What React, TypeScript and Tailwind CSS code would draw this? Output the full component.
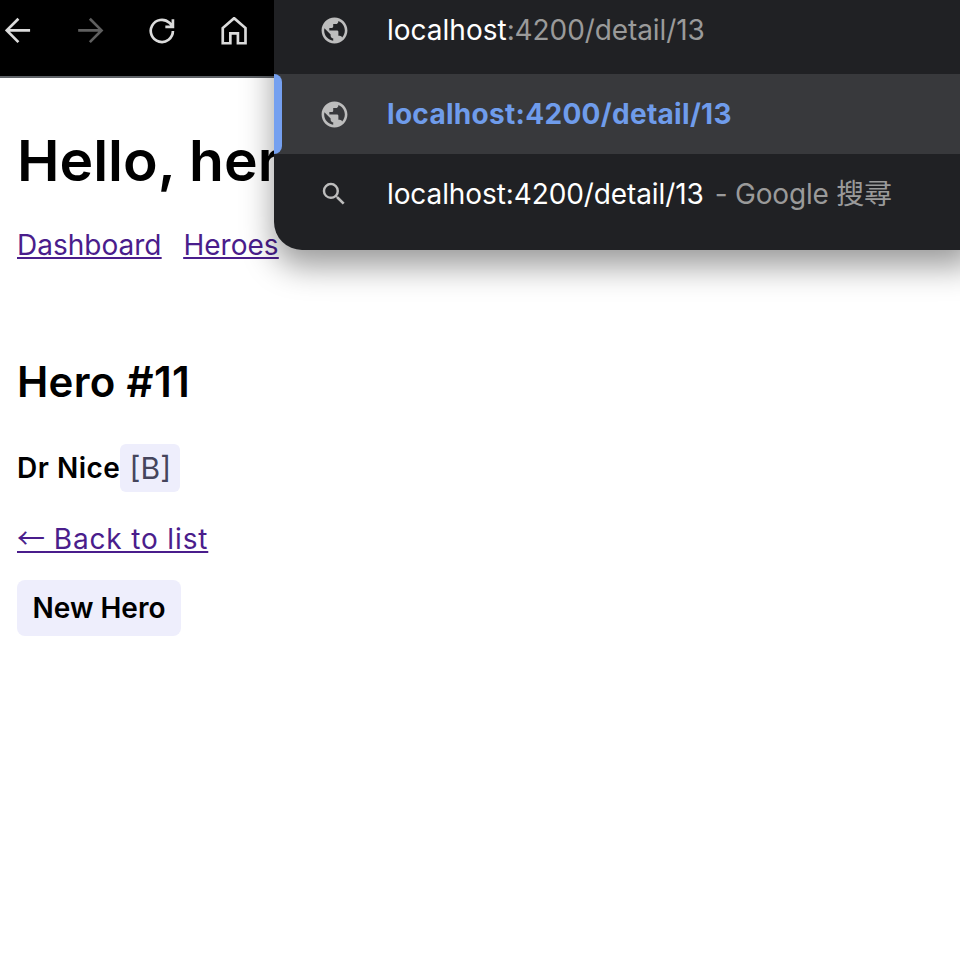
const FONT = "font-['Inter','Noto_Sans_CJK_TC',sans-serif]";

function GlobeIcon() {
  return (
    <svg viewBox="0 0 24 24" className="h-[31px] w-[31px]" fill="#bdbdbd">
      <path d="M12 2C6.48 2 2 6.48 2 12s4.48 10 10 10 10-4.48 10-10S17.52 2 12 2zM11 19.93c-3.95-.49-7-3.85-7-7.93 0-.62.08-1.21.21-1.79L9 15v1c0 1.1.9 2 2 2v1.93zm6.9-2.54c-.26-.81-1-1.39-1.9-1.39h-1v-3c0-.55-.45-1-1-1H8v-2h2c.55 0 1-.45 1-1V7h2c1.1 0 2-.9 2-2v-.41c2.93 1.19 5 4.06 5 7.41 0 2.08-.8 3.97-2.1 5.39z" />
    </svg>
  );
}

function SearchIcon() {
  return (
    <svg viewBox="0 0 24 24" className="h-[30px] w-[30px]" fill="#bdbdbd">
      <path d="M15.5 14h-.79l-.28-.27A6.471 6.471 0 0 0 16 9.5 6.5 6.5 0 1 0 9.5 16c1.61 0 3.09-.59 4.23-1.57l.27.28v.79l5 4.99L20.49 19l-4.99-5zm-6 0C7.01 14 5 11.99 5 9.5S7.01 5 9.5 5 14 7.01 14 9.5 11.99 14 9.5 14z" />
    </svg>
  );
}

function ToolbarIcon({ path, className }: { path: string; className: string }) {
  return (
    <svg viewBox="0 0 24 24" className={className} fill="none" stroke="currentColor" strokeWidth="2.3">
      <path d={path} />
    </svg>
  );
}

export default function App() {
  return (
    <div className={`relative h-[962px] w-[960px] overflow-hidden bg-white text-black ${FONT}`}>
      {/* Browser toolbar */}
      <div className="flex h-[78px] items-start border-b-2 border-[#5f6368] bg-black pl-[5px] pt-[17px] text-[#dcdcdc]">
        <ToolbarIcon className="h-7 w-7" path="M21.5 11.5H2M11.5 1.5l-10 10 10 10" />
        <ToolbarIcon className="ml-[44px] h-7 w-7 text-[#5f5f5f]" path="M1 11.5h19.5M11 1.5l10 10-10 10" />
        <ToolbarIcon className="ml-[44px] h-7 w-7" path="M20.5 12a9.5 9.5 0 1 1-3-7L20.5 8M20.5 2v6.5H14" />
        <ToolbarIcon className="ml-[44px] h-7 w-7" path="M1.5 22.5V9.5L11.25 1 21 9.5v13h-6.5V14H8v8.5z" />
      </div>

      {/* Page content */}
      <main className="px-[17px]">
        <h1 className="mt-[49px] text-[57px] font-semibold leading-[68px]">Hello, heroes</h1>
        <nav className="mt-[32px] flex gap-[22px] text-[28px] leading-[36px] text-[#4a1d8c] underline">
          <a href="#">Dashboard</a>
          <a href="#">Heroes</a>
        </nav>
        <h2 className="mt-[93px] text-[42px] font-semibold leading-[52px] tracking-[0.3px]">Hero #11</h2>
        <div className="mt-[36px] flex items-center">
          <span className="text-[28px] font-semibold tracking-[0.5px]">Dr Nice</span>
          <span className="flex h-[48px] w-[60px] items-center justify-center rounded-md bg-[#eeeefc] text-[30px] text-[#45455c]">
            [B]
          </span>
        </div>
        <a href="#" className="mt-[23px] block text-[28px] leading-[44px] tracking-[0.85px] text-[#4a1d8c] underline">
          <span className="font-['Noto_Sans_CJK_TC',sans-serif] tracking-normal">←</span> Back to list
        </a>
        <button className="mt-[19px] flex h-[56px] w-[164px] items-center justify-center rounded-lg bg-[#eeeefc] text-[28px] font-semibold">
          New Hero
        </button>
      </main>

      {/* Omnibox dropdown */}
      <div className="absolute left-[274px] top-0 h-[250px] w-[700px] rounded-bl-[28px] bg-[#202124] text-[28px] shadow-[0_16px_32px_rgba(0,0,0,0.4)]">
        <div className="flex h-[74px] items-center pb-[14px]">
          <div className="flex w-[113px] justify-center pl-[7px]">
            <GlobeIcon />
          </div>
          <span className="text-white">localhost</span>
          <span className="tracking-[-0.1px] text-[#9a9a9a]">:4200/detail/13</span>
        </div>
        <div className="relative flex h-[80px] items-center bg-[#38393c]">
          <span className="absolute left-0 top-0 h-full w-2 rounded-r-lg bg-[#75a0f0]" />
          <div className="flex w-[113px] justify-center pl-[7px]">
            <GlobeIcon />
          </div>
          <span className="font-bold tracking-[0.3px] text-[#6f9ceb]">localhost:4200/detail/13</span>
        </div>
        <div className="flex h-[80px] items-center">
          <div className="flex w-[113px] justify-center pl-[7px]">
            <SearchIcon />
          </div>
          <span className="tracking-[-0.1px] text-white">localhost:4200/detail/13</span>
          <span className="ml-[11px] tracking-[-0.2px] text-[#9a9a9a]">- Google 搜尋</span>
        </div>
      </div>
    </div>
  );
}
